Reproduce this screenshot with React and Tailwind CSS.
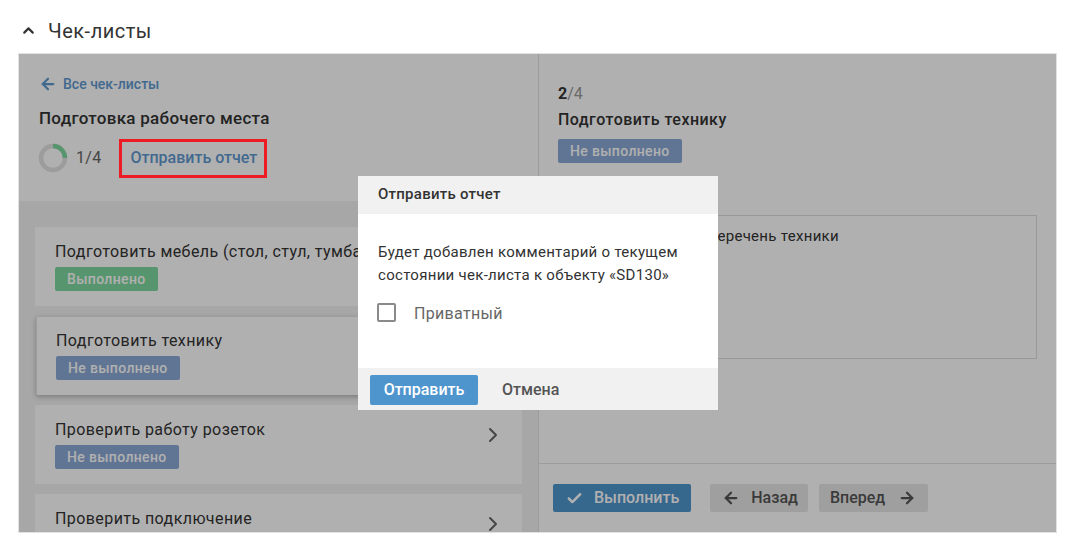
import { ArrowLeft, ArrowRight, Check, ChevronRight, ChevronUp } from 'lucide-react';

const items = [
  { title: 'Подготовить мебель (стол, стул, тумба)', status: 'Выполнено', done: true },
  { title: 'Подготовить технику', status: 'Не выполнено', active: true },
  { title: 'Проверить работу розеток', status: 'Не выполнено' },
  { title: 'Проверить подключение', status: 'Не выполнено' },
];

function Badge({ done, children }) {
  return (
    <span
      className={`inline-flex h-6 items-center rounded-[2px] px-3 text-sm font-medium tracking-[0.35px] text-white ${
        done ? 'bg-[#7fd8a0]' : 'bg-[#8ba9d6]'
      }`}
    >
      {children}
    </span>
  );
}

function Ring() {
  return (
    <svg width="30" height="30" viewBox="0 0 30 30" className="ml-[-1px] shrink-0">
      <circle cx="15" cy="15" r="12" fill="none" stroke="#e3e3e3" strokeWidth="4.5" />
      <path d="M15 3 A12 12 0 0 1 27 15" fill="none" stroke="#7fd8a0" strokeWidth="4.5" />
    </svg>
  );
}

function ChecklistCard({ title, status, done, active }) {
  return (
    <div
      className={`relative h-[79px] shrink-0 bg-white ${
        active
          ? 'ml-px rounded-[2px] border-t border-l border-[#e4e4e4] pt-[14px] pl-[19px] shadow-[0_2px_5px_rgba(0,0,0,0.25)]'
          : 'pt-[15px] pl-[20px]'
      }`}
    >
      <div className="text-base leading-[20px] tracking-[0.42px] text-[#333]">{title}</div>
      <div className="mt-[5px]">
        <Badge done={done}>{status}</Badge>
      </div>
      <ChevronRight size={24} strokeWidth={2} className="absolute top-[18px] right-[17px] text-[#666]" />
    </div>
  );
}

export default function App() {
  return (
    <div className="h-[550px] w-[1074px] overflow-hidden bg-white font-['Roboto',sans-serif] text-[#333]">
      <div className="flex h-[53px] items-center gap-[11px] pt-[8px] pl-[20px]">
        <ChevronUp size={17} strokeWidth={3} className="text-[#333]" />
        <h2 className="text-xl font-normal tracking-[0.5px]">Чек-листы</h2>
      </div>

      <div className="relative ml-[18px] h-[480px] w-[1039px] overflow-hidden border border-[#e2e2e2]">
        <div className="flex h-full">
          {/* left column */}
          <div className="flex w-[520px] shrink-0 flex-col border-r border-[#e2e2e2]">
            <div className="h-[147px] shrink-0 pt-[21px] pl-[20px]">
              <a className="flex items-center gap-[6px] text-sm leading-[18px] font-medium text-[#5f99cf]">
                <ArrowLeft size={18} strokeWidth={3} />
                Все чек-листы
              </a>
              <div className="mt-[15px] text-[17px] leading-[20px] font-medium tracking-[0.28px]">
                Подготовка рабочего места
              </div>
              <div className="mt-[15px] flex items-center">
                <Ring />
                <span className="ml-[8px] text-base tracking-[0.3px] text-[#666]">1/4</span>
                <a className="mt-[-1px] ml-[29px] text-base font-medium text-[#5f99cf]">Отправить отчет</a>
              </div>
            </div>
            <div className="flex min-h-0 flex-1 flex-col gap-[10px] bg-[#f2f2f2] px-4 pt-[26px]">
              {items.map((item) => (
                <ChecklistCard key={item.title} {...item} />
              ))}
            </div>
          </div>

          {/* right column */}
          <div className="flex min-w-0 flex-1 flex-col">
            <div className="min-h-0 flex-1 px-[19px] pt-[30px]">
              <div className="text-base leading-[20px] text-[#999]">
                <b className="font-bold text-[#333]">2</b>/4
              </div>
              <div className="mt-[6px] text-base leading-[20px] font-medium tracking-[0.47px]">Подготовить технику</div>
              <div className="mt-[9px]">
                <Badge>Не выполнено</Badge>
              </div>
              <div className="mt-[52px] h-[144px] border border-[#dcdcdc] pt-[10px] pl-[14px] text-[15px] leading-[20px] tracking-[0.3px]">
                Подготовить весь перечень техники
              </div>
            </div>
            <div className="flex h-[69px] shrink-0 items-start gap-[19px] border-t border-[#e2e2e2] px-[14px] pt-[20px]">
              <button className="flex h-[28px] items-center gap-[11px] rounded-[2px] bg-[#4f95cd] pr-[12px] pl-[13px] text-base font-medium text-white">
                <Check size={17} strokeWidth={3.5} />
                Выполнить
              </button>
              <div className="flex gap-[11px]">
                <button className="flex h-[28px] items-center gap-[11px] rounded-[2px] bg-[#e6e6e6] pr-[10px] pl-[12px] text-base font-medium text-[#555]">
                  <ArrowLeft size={18} strokeWidth={3} />
                  Назад
                </button>
                <button className="flex h-[28px] items-center gap-[13px] rounded-[2px] bg-[#e6e6e6] pr-[12px] pl-[11px] text-base font-medium text-[#555]">
                  Вперед
                  <ArrowRight size={18} strokeWidth={3} />
                </button>
              </div>
            </div>
          </div>
        </div>

        {/* dimmer */}
        <div className="absolute inset-0 bg-[rgba(0,0,0,0.31)]" />

        {/* modal */}
        <div className="absolute top-[122px] left-[339px] flex h-[234px] w-[360px] flex-col bg-white">
          <div className="flex h-[38px] shrink-0 items-center bg-[#f1f1f1] pb-[2px] pl-[20px] text-[15px] font-medium tracking-[0.25px]">
            Отправить отчет
          </div>
          <div className="flex-1 px-[20px] pt-[27px]">
            <p className="text-[15px] leading-[23px] tracking-[0.29px]">
              Будет добавлен комментарий о текущем
              <br />
              состоянии чек-листа к объекту «SD130»
            </p>
            <label className="mt-[10px] flex h-[30px] items-center text-base tracking-[0.33px] text-[#666]">
              <span className="ml-[-1px] h-[19px] w-[19px] rounded-[2px] border-2 border-[#8a8a8a] bg-white" />
              <span className="mt-[3px] ml-[18px]">Приватный</span>
            </label>
          </div>
          <div className="flex h-[42px] shrink-0 items-start bg-[#f1f1f1] pt-[7px] pl-[12px]">
            <button className="h-[30px] w-[108px] rounded-[2px] bg-[#4f95cd] text-base font-medium text-white">
              Отправить
            </button>
            <button className="ml-[24px] h-[30px] text-base font-medium text-[#555]">Отмена</button>
          </div>
        </div>

        {/* red annotation frame */}
        <div className="absolute top-[85px] left-[100px] h-[39px] w-[148px] border-[3px] border-[#ed1c24]" />
      </div>
    </div>
  );
}
